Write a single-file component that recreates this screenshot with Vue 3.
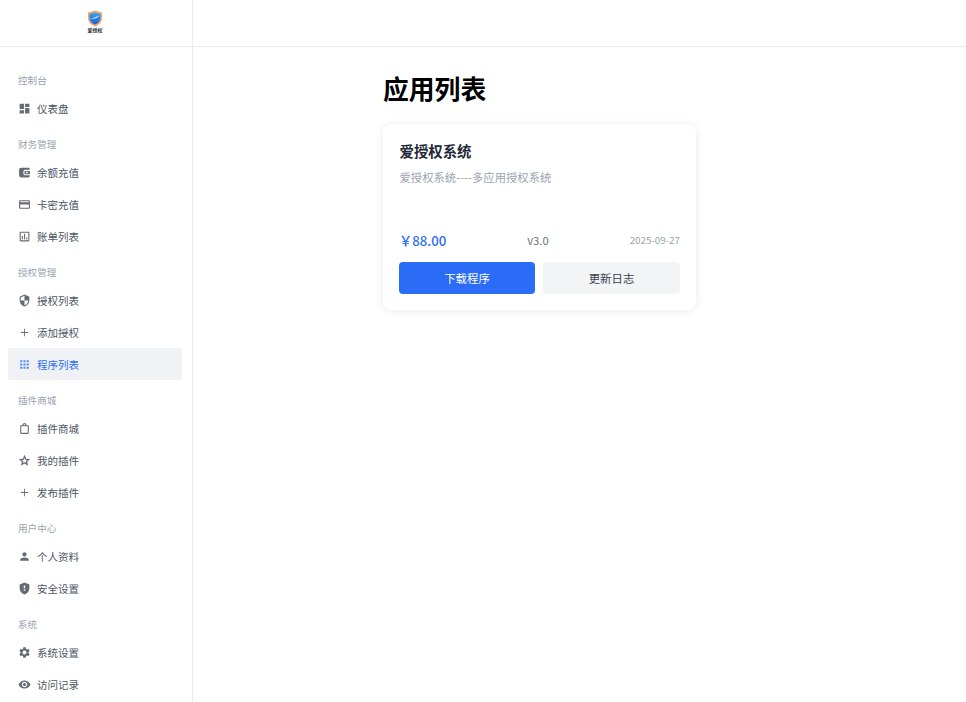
<script setup>
const icons = {
  dash: 'M3 13h8V3H3v10zm0 8h8v-6H3v6zm10 0h8V11h-8v10zm0-18v6h8V3h-8z',
  wallet: 'M6 3h14a1.500 1.500 0 0 1 1.500 1.500V7H13a3 3 0 0 0-3 3v4a3 3 0 0 0 3 3h8.500v2.500A1.500 1.500 0 0 1 20 21H6a4 4 0 0 1-4-4V7a4 4 0 0 1 4-4zm7 6h9v6h-9a1 1 0 0 1-1-1v-4a1 1 0 0 1 1-1zm2 1.500v3h3v-3h-3z',
  card: 'M20 4H4c-1.110 0-1.990.89-1.990 2L2 18c0 1.110.89 2 2 2h16c1.110 0 2-.89 2-2V6c0-1.110-.89-2-2-2zm0 14H4v-6h16v6zm0-10H4V6h16v2z',
  bill: 'M19 3H5c-1.100 0-2 .9-2 2v14c0 1.100.9 2 2 2h14c1.100 0 2-.9 2-2V5c0-1.100-.9-2-2-2zm0 16H5V5h14v14zM7 11h2v6H7zm4-4h2v10h-2zm4 7h2v3h-2z',
  shield: 'M12 1L3 5v6c0 5.550 3.840 10.740 9 12 5.160-1.260 9-6.450 9-12V5l-9-4zm0 10.990h7c-.53 4.120-3.280 7.790-7 8.940V12H5V6.300l7-3.110v8.800z',
  plus: 'M11.200 5h1.600v6.200H19v1.600h-6.200V19h-1.600v-6.200H5v-1.600h6.200z',
  grid: 'M4 4h4v4H4zm6 0h4v4h-4zm6 0h4v4h-4zM4 10h4v4H4zm6 0h4v4h-4zm6 0h4v4h-4zM4 16h4v4H4zm6 0h4v4h-4zm6 0h4v4h-4z',
  bag: 'M18 6h-2c0-2.210-1.790-4-4-4S8 3.790 8 6H6c-1.100 0-2 .9-2 2v12c0 1.100.9 2 2 2h12c1.100 0 2-.9 2-2V8c0-1.100-.9-2-2-2zm-6-2c1.100 0 2 .9 2 2h-4c0-1.100.9-2 2-2zm6 16H6V8h12v12z',
  star: 'M22.500 9.240l-7.500-.650L12 1.500 9 8.590l-7.500.650 5.700 4.930L5.500 21.500 12 17.600l6.500 3.900-1.700-7.330 5.700-4.930zM12 14.800l-3 1.800.8-3.400-2.640-2.280 3.480-.3L12 7.400l1.360 3.220 3.480.3-2.640 2.280.8 3.400-3-1.800z',
  person: 'M12 12c2.210 0 4-1.790 4-4s-1.790-4-4-4-4 1.790-4 4 1.790 4 4 4zm0 2c-2.670 0-8 1.340-8 4v2h16v-2c0-2.660-5.330-4-8-4z',
  guard: 'M12 1L3 4.500v6.600c0 5.500 3.800 10.600 9 11.900 5.200-1.300 9-6.400 9-11.900V4.500L12 1zm1.300 15h-2.600v-2.600h2.600V16zm0-4.500h-2.600V6.500h2.600v5z',
  gear: 'M19.140 12.940c.04-.3.06-.61.06-.94 0-.32-.02-.64-.07-.94l2.030-1.580c.18-.14.23-.41.12-.61l-1.920-3.320c-.12-.22-.37-.29-.59-.22l-2.390.96c-.5-.38-1.030-.7-1.620-.94l-.36-2.540c-.04-.24-.24-.41-.48-.41h-3.840c-.24 0-.43.17-.47.41l-.36 2.540c-.59.24-1.130.57-1.620.94l-2.390-.96c-.22-.08-.47 0-.59.22L2.740 8.870c-.12.21-.08.47.12.61l2.030 1.580c-.05.3-.09.63-.09.94s.02.64.07.94l-2.030 1.580c-.18.14-.23.41-.12.61l1.920 3.320c.12.22.37.29.59.22l2.390-.96c.5.38 1.030.7 1.620.94l.36 2.540c.05.24.24.41.48.41h3.840c.24 0 .44-.17.47-.41l.36-2.540c.59-.24 1.130-.56 1.620-.94l2.390.96c.22.08.47 0 .59-.22l1.920-3.320c.12-.22.07-.47-.12-.61l-2.010-1.580zM12 15.600c-1.980 0-3.600-1.620-3.600-3.600s1.620-3.600 3.600-3.600 3.600 1.620 3.600 3.600-1.620 3.600-3.600 3.600z',
  eye: 'M12 4.500C7 4.500 2.730 7.610 1 12c1.730 4.390 6 7.500 11 7.500s9.270-3.110 11-7.500c-1.730-4.390-6-7.500-11-7.500zM12 17c-2.760 0-5-2.240-5-5s2.240-5 5-5 5 2.240 5 5-2.240 5-5 5zm0-8c-1.660 0-3 1.340-3 3s1.340 3 3 3 3-1.340 3-3-1.340-3-3-3z'
}
const groups = [
  { title: '控制台', items: [{ t: '仪表盘', i: 'dash' }] },
  { title: '财务管理', items: [{ t: '余额充值', i: 'wallet' }, { t: '卡密充值', i: 'card' }, { t: '账单列表', i: 'bill' }] },
  { title: '授权管理', items: [{ t: '授权列表', i: 'shield' }, { t: '添加授权', i: 'plus' }, { t: '程序列表', i: 'grid', active: true }] },
  { title: '插件商城', items: [{ t: '插件商城', i: 'bag' }, { t: '我的插件', i: 'star' }, { t: '发布插件', i: 'plus' }] },
  { title: '用户中心', items: [{ t: '个人资料', i: 'person' }, { t: '安全设置', i: 'guard' }] },
  { title: '系统', items: [{ t: '系统设置', i: 'gear' }, { t: '访问记录', i: 'eye' }] }
]
</script>

<template>
  <div class="app">
    <aside class="side">
      <div class="logo">
        <svg class="shield" viewBox="0 0 16 17" width="16" height="17">
          <defs>
            <linearGradient id="sg" x1="0" y1="0" x2="0" y2="1">
              <stop offset="0" stop-color="#38a4ee" />
              <stop offset="1" stop-color="#1c63e0" />
            </linearGradient>
          </defs>
          <path d="M8 .5 15 2.500V8c0 4-3 7-7 8.500C4 15 1 12 1 8V2.500z" fill="#f9a468" />
          <path d="M8 2.500 13.500 4v4c0 3-2.300 5.300-5.500 6.500C4.800 13.300 2.500 11 2.500 8V4z" fill="url(#sg)" />
          <path d="M3 8.500C6 8.500 9 6.500 12.500 5.500 10.500 8 7 9.500 3 8.500z" fill="#d9efff" />
        </svg>
        <span class="logo-text">爱授权</span>
      </div>
      <nav class="nav">
        <section v-for="g in groups" :key="g.title" class="group">
          <div class="group-title">{{ g.title }}</div>
          <a v-for="it in g.items" :key="it.t" class="item" :class="{ active: it.active }">
            <svg class="ico" viewBox="0 0 24 24"><path :d="icons[it.i]" fill="currentColor" fill-rule="evenodd" /></svg>
            <span>{{ it.t }}</span>
          </a>
        </section>
      </nav>
    </aside>
    <div class="body">
      <header class="top"></header>
      <main class="main">
        <h1 class="title">应用列表</h1>
        <article class="card">
          <h3 class="name">爱授权系统</h3>
          <p class="desc">爱授权系统----多应用授权系统</p>
          <div class="meta">
            <span class="price">￥88.00</span>
            <span class="ver">v3.0</span>
            <span class="date">2025-09-27</span>
          </div>
          <div class="btns">
            <button class="btn primary">下载程序</button>
            <button class="btn plain">更新日志</button>
          </div>
        </article>
      </main>
    </div>
  </div>
</template>

<style>
html, body { margin: 0; background: #fff; overflow: hidden; }
</style>

<style scoped>
.app {
  display: flex;
  height: 702px;
  overflow: hidden;
  background: #fff;
  font-family: "Noto Sans CJK SC", "Noto Sans", sans-serif;
  color: #1f2937;
}
.side {
  width: 193px;
  flex: none;
  box-sizing: border-box;
  border-right: 1px solid #e9ebef;
}
.logo {
  height: 47px;
  box-sizing: border-box;
  border-bottom: 1px solid #e9ebef;
  display: flex;
  flex-direction: column;
  align-items: center;
  padding-top: 10px;
  padding-right: 2px;
}
.shield { display: block; }
.logo-text {
  font-size: 5px;
  line-height: 6px;
  font-weight: 700;
  color: #333;
}
.nav { padding: 17px 10px 0 8px; }
.group { margin-bottom: 4px; }
.group-title {
  height: 28px;
  box-sizing: border-box;
  padding: 9px 0 0 10px;
  font-size: 9.6px;
  line-height: 14px;
  color: #9ca3af;
}
.item {
  height: 32px;
  display: flex;
  align-items: center;
  gap: 6px;
  padding-left: 10px;
  font-size: 10.5px;
  color: #4b5563;
}
.item.active {
  background: #f0f1f5;
  color: #2b6cf6;
}
.ico { width: 13px; height: 13px; flex: none; color: #666b73; }
.active .ico { color: #5b8cf6; }
.body { flex: 1; min-width: 0; }
.top {
  height: 47px;
  box-sizing: border-box;
  border-bottom: 1px solid #e9ebef;
}
.main { padding: 21px 0 0 190px; }
.title {
  margin: 0;
  font-size: 25.8px;
  line-height: 40px;
  font-weight: 700;
  color: #000;
}
.card {
  width: 313px;
  height: 186px;
  margin-top: 16px;
  box-sizing: border-box;
  padding: 15px 16px 16px;
  border-radius: 8px;
  background: #fff;
  box-shadow: 0 1px 8px rgba(0, 0, 0, .09);
  display: flex;
  flex-direction: column;
}
.name {
  margin: 0 0 0 .5px;
  font-size: 14.4px;
  line-height: 24px;
  font-weight: 700;
  color: #1f2937;
}
.desc {
  margin: 4px 0 0 .5px;
  font-size: 11.35px;
  line-height: 20px;
  color: #9ca3af;
}
.meta {
  margin-top: auto;
  display: flex;
  justify-content: space-between;
  align-items: center;
  height: 22px;
}
.price { font-size: 13.2px; font-weight: 500; color: #2b6cf6; }
.ver { font-size: 11.2px; color: #6b7280; }
.date { font-size: 9.8px; color: #9ca3af; }
.btns {
  margin-top: 11px;
  display: grid;
  grid-template-columns: 136px 137px;
  gap: 8px;
}
.btn {
  height: 32px;
  border: 0;
  border-radius: 4px;
  padding: 0;
  font-family: inherit;
  font-size: 11.4px;
}
.primary { background: #2b6cf6; color: #fff; }
.plain { background: #f3f4f6; color: #374151; }
</style>
